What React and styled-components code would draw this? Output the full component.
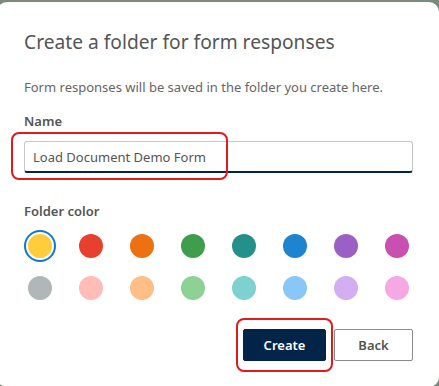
import styled, { createGlobalStyle } from 'styled-components';

const GlobalStyle = createGlobalStyle`
  html, body {
    margin: 0;
    padding: 0;
    background: #7a8a7c;
    overflow: hidden;
  }
  * { box-sizing: border-box; }
`;

const Dialog = styled.div`
  margin: 2px 0 0 -3px;
  width: 442px;
  height: 385px;
  background: #ffffff;
  border-radius: 10px;
  padding: 26px 26px 0 27px;
  font-family: "Noto Sans", "Open Sans", sans-serif;
  display: flex;
  flex-direction: column;
`;

const Title = styled.h1`
  margin: 0;
  font-size: 19.2px;
  line-height: 28px;
  font-weight: 400;
  color: #555555;
`;

const Description = styled.p`
  margin: 22px 0 0;
  font-size: 13px;
  line-height: 18px;
  color: #666666;
`;

const Label = styled.div`
  margin-top: ${({ $top }) => $top}px;
  font-size: 13px;
  line-height: 18px;
  font-weight: 600;
  color: #555555;
`;

const InputWrap = styled.div`
  position: relative;
  margin-top: 11px;
`;

const Input = styled.input`
  display: block;
  width: 100%;
  height: 32px;
  border: 1px solid #c8c8c8;
  border-bottom: 2px solid #012448;
  border-radius: 3px;
  padding: 0 8px;
  font-family: inherit;
  font-size: 13px;
  color: #555555;
  outline: none;
`;

const Highlight = styled.div`
  position: absolute;
  left: ${({ $left }) => $left}px;
  top: ${({ $top }) => $top}px;
  width: ${({ $w }) => $w}px;
  height: ${({ $h }) => $h}px;
  border: 2px solid #e01b1b;
  border-radius: 8px;
  pointer-events: none;
`;

const Swatches = styled.div`
  margin-top: 10px;
  display: grid;
  grid-template-columns: repeat(8, 32px);
  column-gap: 19px;
  row-gap: 10px;
`;

const Swatch = styled.button`
  width: 32px;
  height: 32px;
  padding: 2px;
  border-radius: 50%;
  border: 2px solid ${({ $selected }) => ($selected ? '#0f78d4' : 'transparent')};
  background: ${({ $color }) => $color};
  background-clip: content-box;
  cursor: pointer;
`;

const Footer = styled.div`
  margin-top: 25px;
  display: flex;
  justify-content: flex-end;
  gap: 8px;
`;

const ButtonWrap = styled.div`
  position: relative;
`;

const Button = styled.button`
  height: 32px;
  width: ${({ $w }) => $w}px;
  border-radius: 2px;
  font-family: inherit;
  font-size: 13px;
  font-weight: 600;
  cursor: pointer;
  background: ${({ $primary }) => ($primary ? '#012448' : '#ffffff')};
  color: ${({ $primary }) => ($primary ? '#ffffff' : '#555555')};
  border: 1px solid ${({ $primary }) => ($primary ? '#012448' : '#8a8a8a')};
`;

const colors = [
  '#ffcd3c', '#e8402e', '#ee7111', '#3f9e4b', '#23918a', '#1e84d0', '#9a60c6', '#c94fb0',
  '#b1b6b8', '#ffbdb5', '#ffbe85', '#8dd195', '#7dd1ce', '#88c7f7', '#d4aef2', '#f5a8e4',
];

const App = () => {
  return (
    <>
      <GlobalStyle />
      <Dialog>
        <Title>Create a folder for form responses</Title>
        <Description>Form responses will be saved in the folder you create here.</Description>
        <Label $top={16}>Name</Label>
        <InputWrap>
          <Input defaultValue="Load Document Demo Form" />
          <Highlight $left={-13} $top={-9} $w={217} $h={48} />
        </InputWrap>
        <Label $top={29}>Folder color</Label>
        <Swatches>
          {colors.map((c, i) => (
            <Swatch key={c} $color={c} $selected={i === 0} aria-label={c} />
          ))}
        </Swatches>
        <Footer>
          <ButtonWrap>
            <Button $primary $w={83}>Create</Button>
            <Highlight $left={-7} $top={-11} $w={97} $h={54} />
          </ButtonWrap>
          <Button $w={79}>Back</Button>
        </Footer>
      </Dialog>
    </>
  );
};

export default App;
